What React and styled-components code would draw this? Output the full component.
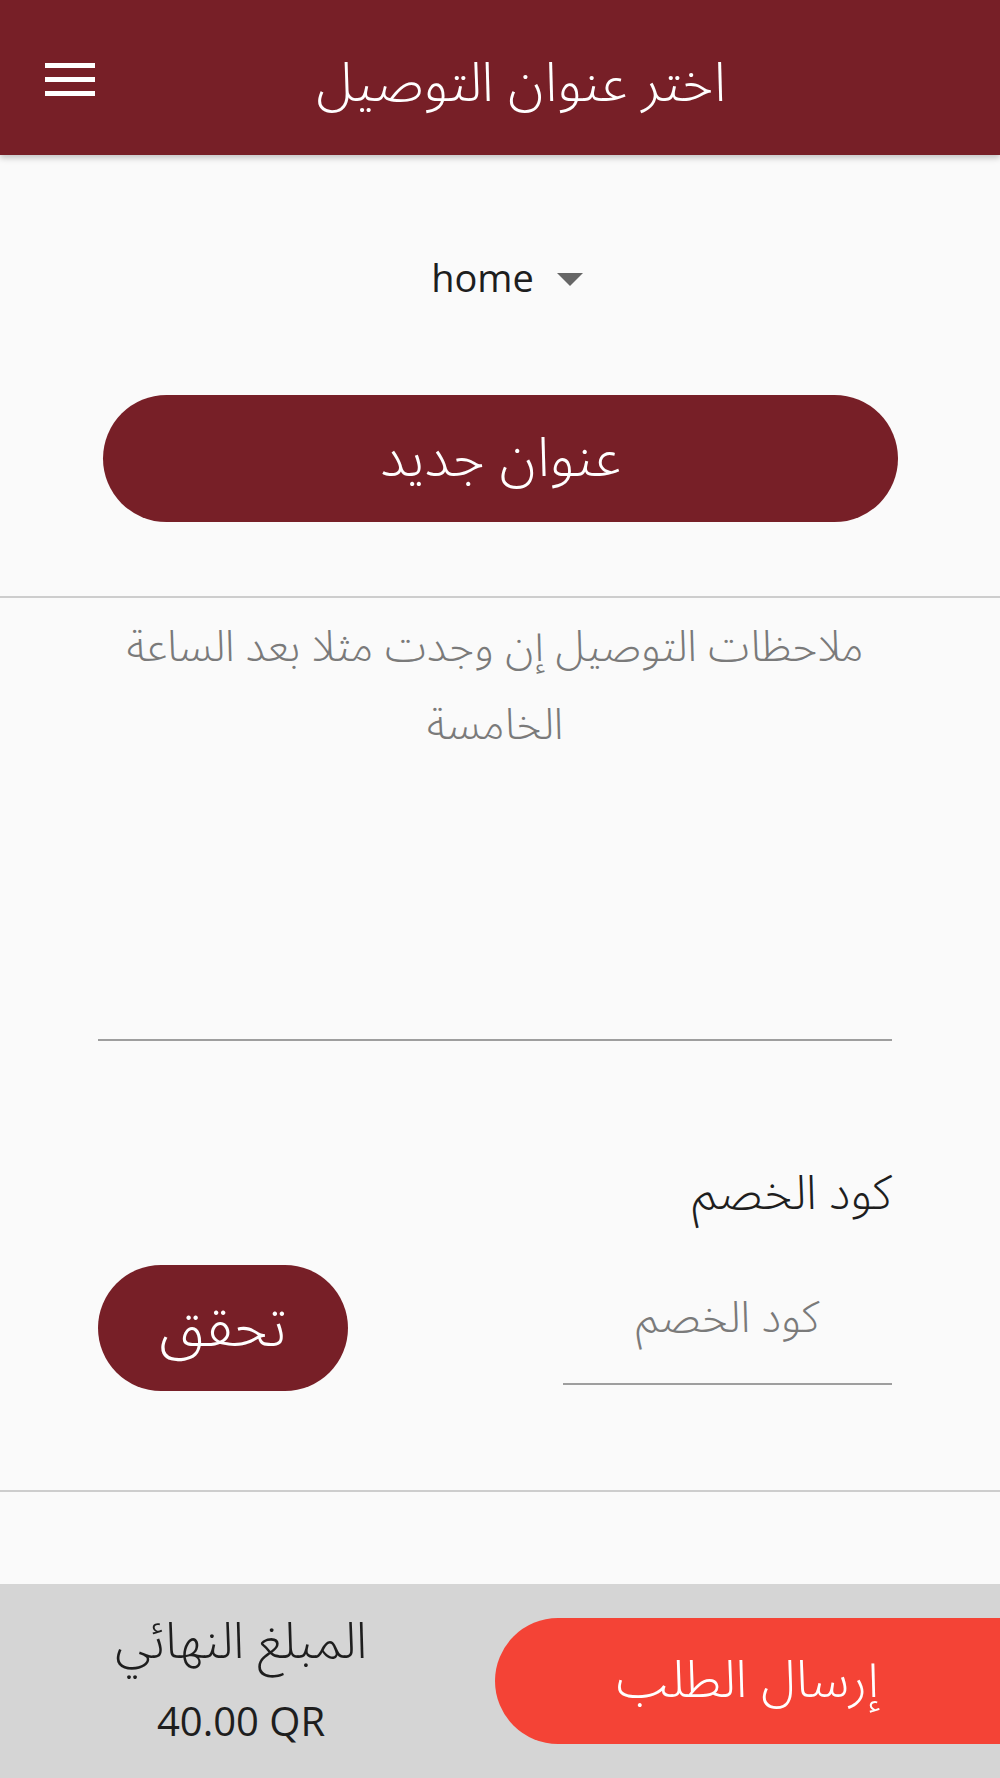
import React from "react";
import styled, { createGlobalStyle } from "styled-components";

const Global = createGlobalStyle`
  html, body { margin: 0; padding: 0; background: #fafafa; }
  * { box-sizing: border-box; }
`;

const AR = `"Noto Sans Arabic", "DejaVu Sans", sans-serif`;
const LAT = `"Open Sans", "Noto Sans", sans-serif`;

const Page = styled.div`
  min-height: 100vh;
  display: flex;
  flex-direction: column;
  background: #fafafa;
`;

const Header = styled.header`
  height: 155px;
  background: #771f27;
  display: flex;
  align-items: center;
  box-shadow: 0 3px 6px rgba(0, 0, 0, 0.22);
  position: relative;
  z-index: 1;
`;

const MenuSlot = styled.div`
  width: 140px;
  padding-left: 45px;
  padding-top: 4px;
  display: flex;
  align-items: center;
`;

const MenuButton = styled.button`
  border: 0;
  background: none;
  padding: 0;
  width: 50px;
  height: 33px;
  display: flex;
  flex-direction: column;
  justify-content: space-between;
  cursor: pointer;
`;

const MenuLine = styled.span`
  display: block;
  height: 5px;
  width: 50px;
  background: #fff;
`;

const Title = styled.h1`
  flex: 1;
  margin: 0 98px 0 0;
  padding-top: 12px;
  text-align: center;
  color: #fff;
  font-family: ${AR};
  font-weight: 300;
  font-size: 54px;
  direction: rtl;
`;

const Content = styled.main`
  display: flex;
  flex-direction: column;
  align-items: stretch;
`;

const SelectRow = styled.div`
  margin-top: 100px;
  display: flex;
  justify-content: center;
  padding-left: 14px;
`;

const Select = styled.div`
  display: inline-flex;
  align-items: center;
  gap: 23px;
  font-family: ${LAT};
  font-size: 38px;
  line-height: 44px;
  color: #1e1e1e;
`;

const Caret = styled.span`
  width: 0;
  height: 0;
  border-left: 13px solid transparent;
  border-right: 13px solid transparent;
  border-top: 13px solid #666;
  margin-top: 4px;
`;

const PillButton = styled.button`
  border: 0;
  border-radius: 999px;
  background: ${(p) => p.$bg || "#771f27"};
  color: #fff;
  font-family: ${AR};
  font-weight: 300;
  font-size: ${(p) => p.$size || 44}px;
  line-height: 1;
  direction: rtl;
  cursor: pointer;
`;

const NewAddress = styled(PillButton)`
  margin: 96px 102px 0 103px;
  height: 127px;
`;

const Divider = styled.hr`
  margin: ${(p) => p.$top || 0}px 0 0 0;
  border: 0;
  height: 2px;
  background: #cdcdcd;
`;

const Notes = styled.textarea`
  margin: 11px 108px 0 98px;
  height: 432px;
  border: 0;
  border-bottom: 2px solid #9e9e9e;
  background: transparent;
  resize: none;
  outline: none;
  direction: rtl;
  text-align: center;
  font-family: ${AR};
  font-weight: 300;
  font-size: 43px;
  line-height: 78px;
  padding: 0;
  color: #222;
  overflow: hidden;
  &::placeholder { color: #7a7a7a; }
`;

const Discount = styled.section`
  margin: 128px 108px 0 98px;
  display: flex;
  flex-direction: column;
`;

const Label = styled.div`
  direction: rtl;
  text-align: right;
  font-family: ${AR};
  font-weight: 300;
  font-size: 48px;
  line-height: 50px;
  color: #1e1e1e;
`;

const DiscountRow = styled.div`
  margin-top: 46px;
  display: flex;
  justify-content: space-between;
  align-items: flex-end;
`;

const Verify = styled(PillButton)`
  width: 250px;
  height: 126px;
  margin-bottom: -6px;
`;

const CodeInput = styled.input`
  width: 329px;
  height: 100px;
  border: 0;
  border-bottom: 2px solid #9e9e9e;
  background: transparent;
  outline: none;
  direction: rtl;
  text-align: center;
  font-family: ${AR};
  font-weight: 300;
  font-size: 44px;
  padding: 0 0 32px 0;
  color: #222;
  &::placeholder { color: #7a7a7a; }
`;

const Footer = styled.footer`
  margin-top: auto;
  height: 194px;
  background: #d5d5d5;
  display: flex;
  align-items: center;
`;

const Total = styled.div`
  width: 482px;
  display: flex;
  flex-direction: column;
  align-items: center;
  gap: 29px;
  color: #1e1e1e;
`;

const TotalLabel = styled.div`
  direction: rtl;
  font-family: ${AR};
  font-weight: 300;
  font-size: 50px;
  line-height: 50px;
`;

const TotalValue = styled.div`
  font-family: ${LAT};
  font-size: 40px;
  line-height: 50px;
`;

const Submit = styled(PillButton)`
  margin-left: 13px;
  flex: 1;
  height: 126px;
  border-radius: 63px 0 0 63px;
`;

export default function App() {
  return (
    <Page>
      <Global />
      <Header>
        <MenuSlot>
          <MenuButton aria-label="menu">
            <MenuLine />
            <MenuLine />
            <MenuLine />
          </MenuButton>
        </MenuSlot>
        <Title>اختر عنوان التوصيل</Title>
      </Header>
      <Content>
        <SelectRow>
          <Select>
            <span>home</span>
            <Caret />
          </Select>
        </SelectRow>
        <NewAddress $size={55}>عنوان جديد</NewAddress>
        <Divider $top={74} />
        <Notes placeholder="ملاحظات التوصيل إن وجدت مثلا بعد الساعة الخامسة" />
        <Discount>
          <Label>كود الخصم</Label>
          <DiscountRow>
            <Verify $size={58}>تحقق</Verify>
            <CodeInput placeholder="كود الخصم" />
          </DiscountRow>
        </Discount>
        <Divider $top={105} />
      </Content>
      <Footer>
        <Total>
          <TotalLabel>المبلغ النهائي</TotalLabel>
          <TotalValue>40.00 QR</TotalValue>
        </Total>
        <Submit $bg="#f44336" $size={52}>إرسال الطلب</Submit>
      </Footer>
    </Page>
  );
}
